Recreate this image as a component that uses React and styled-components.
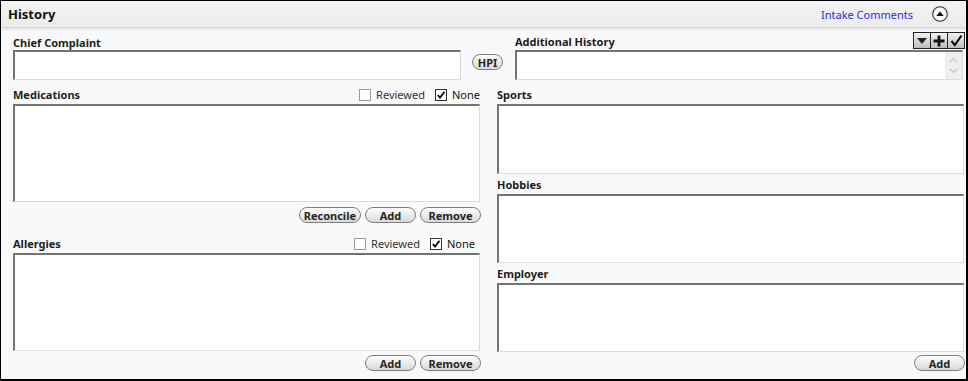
import React from 'react'
import styled, { createGlobalStyle } from 'styled-components'

const GlobalStyle = createGlobalStyle`
  html, body { margin: 0; padding: 0; background: #fff; }
  body { font-family: "Noto Sans", "Liberation Sans", sans-serif; font-size: 11px; color: #1a1a1a; }
`

const Frame = styled.div`
  box-sizing: border-box;
  width: 968px;
  height: 381px;
  border: 1px solid #000;
  border-right-width: 2px;
  border-bottom-width: 2px;
  background: #f9f9f9;
  display: flex;
  flex-direction: column;
  overflow: hidden;
`

const Header = styled.div`
  height: 26px;
  flex: none;
  display: flex;
  align-items: center;
  padding: 0 18px 0 7px;
  background: linear-gradient(#f3f3f3, #ececec);
  box-shadow: 0 1px 1px #d6d6d6, 0 3px 3px rgba(0,0,0,0.07);
  position: relative;
  z-index: 1;
`

const Title = styled.div`
  font-size: 13px;
  font-weight: bold;
  color: #111;
  flex: 1;
`

const IntakeLink = styled.a`
  color: #2a2aee;
  font-size: 11px;
  text-decoration: none;
  margin-right: 19px;
  cursor: pointer;
`

const Collapse = styled.div`
  width: 16px;
  height: 16px;
  display: flex;
  align-items: center;
  justify-content: center;
`

const Body = styled.div`
  flex: 1;
  padding: 5px 3px 0 12px;
  display: flex;
  flex-direction: column;
`

const TopRow = styled.div`
  display: flex;
  align-items: flex-end;
`

const Field = styled.div`
  display: flex;
  flex-direction: column;
  width: ${p => p.$width ? p.$width + 'px' : 'auto'};
  flex: ${p => p.$width ? 'none' : '1'};
`

const LabelRow = styled.div`
  height: ${p => p.$h || 14}px;
  display: flex;
  align-items: ${p => p.$align || 'center'};
  justify-content: space-between;
  margin-top: ${p => p.$mt || 0}px;
  margin-bottom: ${p => p.$mb || 0}px;
`

const Label = styled.div`
  font-weight: bold;
  font-size: 11px;
  line-height: 14px;
  color: #1d1d1d;
  margin-top: ${p => p.$mt || 0}px;
`

const TextBox = styled.div`
  box-sizing: border-box;
  height: ${p => p.$h}px;
  background: #fff;
  border-top: 2px solid #747474;
  border-left: 2px solid #747474;
  border-right: 1px solid #dcdcdc;
  border-bottom: 1px solid #dcdcdc;
  display: flex;
  justify-content: flex-end;
`

const ScrollBar = styled.div`
  width: 17px;
  background: #eeeeee;
  display: flex;
  flex-direction: column;
  justify-content: space-around;
  align-items: center;
  padding: 2px 0;
`

const PillButton = styled.button`
  box-sizing: border-box;
  height: 16px;
  width: ${p => p.$w ? p.$w + 'px' : 'auto'};
  padding: 0 4px;
  border: 1px solid #7e7e7e;
  border-radius: 8px;
  background: linear-gradient(#fefefe, #e9e9e9 55%, #d9d9d9);
  font-family: "Noto Sans", "Liberation Sans", sans-serif;
  font-size: 11px;
  font-weight: bold;
  line-height: 13px;
  color: #262626;
  cursor: pointer;
`

const HpiButton = styled(PillButton)`
  width: 31px;
  padding: 0;
  margin: 0 12px 10px 11px;
  flex: none;
`

const Tools = styled.div`
  display: flex;
  margin-right: -2px;
`

const ToolButton = styled.div`
  box-sizing: border-box;
  width: 18px;
  height: 17px;
  border: 1px solid #222;
  margin-left: -1px;
  background: linear-gradient(#f2f2f2, #bdbdbd);
  display: flex;
  align-items: center;
  justify-content: center;
`

const Columns = styled.div`
  display: grid;
  grid-template-columns: 467px 467px;
  column-gap: 17px;
`

const Column = styled.div`
  display: flex;
  flex-direction: column;
`

const Checks = styled.div`
  display: flex;
  align-items: center;
  gap: 10px;
  padding-right: ${p => p.$inset || 0}px;
`

const CheckItem = styled.label`
  display: flex;
  align-items: center;
  gap: 5px;
  font-size: 11px;
  line-height: 14px;
  color: ${p => p.$on ? '#111' : '#333'};
`

const Box = styled.span`
  box-sizing: border-box;
  width: 12px;
  height: 12px;
  background: #fff;
  border: 1px solid ${p => p.$on ? '#333' : '#9a9a9a'};
  display: flex;
  align-items: center;
  justify-content: center;
`

const ButtonRow = styled.div`
  display: flex;
  justify-content: flex-end;
  gap: 4px;
  margin-top: ${p => p.$mt || 5}px;
  margin-right: -1px;
`

const Check = ({ label, on }) => (
  <CheckItem $on={on}>
    <Box $on={on}>
      {on && (
        <svg width="10" height="10" viewBox="0 0 10 10">
          <path d="M1.8 5 L4 7.6 L8.5 1.8" fill="none" stroke="#000" strokeWidth="1.7" />
        </svg>
      )}
    </Box>
    {label}
  </CheckItem>
)

const App = () => (
  <>
    <GlobalStyle />
    <Frame>
      <Header>
        <Title>History</Title>
        <IntakeLink>Intake Comments</IntakeLink>
        <Collapse>
          <svg width="16" height="16" viewBox="0 0 16 16">
            <circle cx="8" cy="8" r="7.3" fill="#f7f7f7" stroke="#333" strokeWidth="1.1" />
            <path d="M4.3 10 L8 5.6 L11.7 10 Z" fill="#111" />
          </svg>
        </Collapse>
      </Header>
      <Body>
        <TopRow>
          <Field $width={448}>
            <LabelRow><Label>Chief Complaint</Label></LabelRow>
            <TextBox $h={30} />
          </Field>
          <HpiButton>HPI</HpiButton>
          <Field>
            <LabelRow $h={18} $align="flex-start">
              <Label $mt={3}>Additional History</Label>
              <Tools>
                <ToolButton>
                  <svg width="12" height="10" viewBox="0 0 12 10">
                    <path d="M1 2 L11 2 L6 8 Z" fill="#222" />
                  </svg>
                </ToolButton>
                <ToolButton>
                  <svg width="12" height="12" viewBox="0 0 12 12">
                    <path d="M4.6 0.5 H7.4 V4.6 H11.5 V7.4 H7.4 V11.5 H4.6 V7.4 H0.5 V4.6 H4.6 Z" fill="#111" />
                  </svg>
                </ToolButton>
                <ToolButton>
                  <svg width="13" height="13" viewBox="0 0 13 13">
                    <path d="M1.5 7 L4.8 11 L11.5 1.5" fill="none" stroke="#000" strokeWidth="2" />
                  </svg>
                </ToolButton>
              </Tools>
            </LabelRow>
            <TextBox $h={30}>
              <ScrollBar>
                <svg width="9" height="6" viewBox="0 0 9 6">
                  <path d="M1 5 L4.5 1.5 L8 5" fill="none" stroke="#c4c4c4" strokeWidth="1.2" />
                </svg>
                <svg width="9" height="6" viewBox="0 0 9 6">
                  <path d="M1 1 L4.5 4.5 L8 1" fill="none" stroke="#c4c4c4" strokeWidth="1.2" />
                </svg>
              </ScrollBar>
            </TextBox>
          </Field>
        </TopRow>
        <Columns>
          <Column>
            <LabelRow $h={15} $mt={7} $mb={2}>
              <Label>Medications</Label>
              <Checks>
                <Check label="Reviewed" />
                <Check label="None" on />
              </Checks>
            </LabelRow>
            <TextBox $h={98} />
            <ButtonRow>
              <PillButton>Reconcile</PillButton>
              <PillButton $w={51}>Add</PillButton>
              <PillButton $w={61}>Remove</PillButton>
            </ButtonRow>
            <LabelRow $h={15} $mt={13} $mb={2}>
              <Label>Allergies</Label>
              <Checks $inset={5}>
                <Check label="Reviewed" />
                <Check label="None" on />
              </Checks>
            </LabelRow>
            <TextBox $h={98} />
            <ButtonRow $mt={4}>
              <PillButton $w={51}>Add</PillButton>
              <PillButton $w={61}>Remove</PillButton>
            </ButtonRow>
          </Column>
          <Column>
            <LabelRow $h={15} $mt={7} $mb={2}>
              <Label>Sports</Label>
            </LabelRow>
            <TextBox $h={70} />
            <LabelRow $h={15} $mt={3} $mb={2}>
              <Label>Hobbies</Label>
            </LabelRow>
            <TextBox $h={69} />
            <LabelRow $h={15} $mt={3} $mb={2}>
              <Label>Employer</Label>
            </LabelRow>
            <TextBox $h={69} />
            <ButtonRow $mt={3}>
              <PillButton $w={51}>Add</PillButton>
            </ButtonRow>
          </Column>
        </Columns>
      </Body>
    </Frame>
  </>
)

export default App
